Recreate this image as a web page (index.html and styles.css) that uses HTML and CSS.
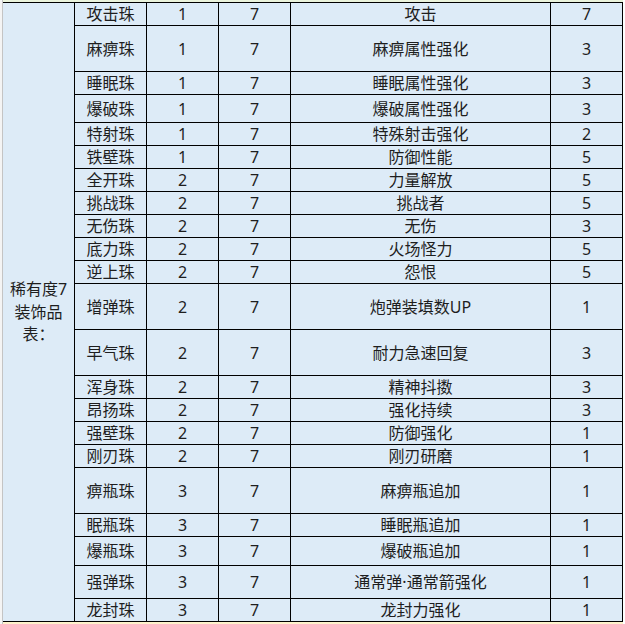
FILE: index.html
```html
<!DOCTYPE html>
<html lang="zh-CN">
<head>
<meta charset="utf-8">
<title>稀有度7装饰品表</title>
<link rel="stylesheet" href="styles.css">
</head>
<body>
<div class="sheet">
  <div class="gutter"></div>
  <div class="area">
    <div class="prev-row"></div>
    <div class="grid">
      <div class="cell merged">稀有度7<br>装饰品<br>表：</div>

      <div class="cell">攻击珠</div><div class="cell">1</div><div class="cell">7</div><div class="cell">攻击</div><div class="cell">7</div>
      <div class="cell">麻痹珠</div><div class="cell">1</div><div class="cell">7</div><div class="cell">麻痹属性强化</div><div class="cell">3</div>
      <div class="cell">睡眠珠</div><div class="cell">1</div><div class="cell">7</div><div class="cell">睡眠属性强化</div><div class="cell">3</div>
      <div class="cell">爆破珠</div><div class="cell">1</div><div class="cell">7</div><div class="cell">爆破属性强化</div><div class="cell">3</div>
      <div class="cell">特射珠</div><div class="cell">1</div><div class="cell">7</div><div class="cell">特殊射击强化</div><div class="cell">2</div>
      <div class="cell">铁壁珠</div><div class="cell">1</div><div class="cell">7</div><div class="cell">防御性能</div><div class="cell">5</div>
      <div class="cell">全开珠</div><div class="cell">2</div><div class="cell">7</div><div class="cell">力量解放</div><div class="cell">5</div>
      <div class="cell">挑战珠</div><div class="cell">2</div><div class="cell">7</div><div class="cell">挑战者</div><div class="cell">5</div>
      <div class="cell">无伤珠</div><div class="cell">2</div><div class="cell">7</div><div class="cell">无伤</div><div class="cell">3</div>
      <div class="cell">底力珠</div><div class="cell">2</div><div class="cell">7</div><div class="cell">火场怪力</div><div class="cell">5</div>
      <div class="cell">逆上珠</div><div class="cell">2</div><div class="cell">7</div><div class="cell">怨恨</div><div class="cell">5</div>
      <div class="cell">增弹珠</div><div class="cell">2</div><div class="cell">7</div><div class="cell">炮弹装填数UP</div><div class="cell">1</div>
      <div class="cell">早气珠</div><div class="cell">2</div><div class="cell">7</div><div class="cell">耐力急速回复</div><div class="cell">3</div>
      <div class="cell">浑身珠</div><div class="cell">2</div><div class="cell">7</div><div class="cell">精神抖擞</div><div class="cell">3</div>
      <div class="cell">昂扬珠</div><div class="cell">2</div><div class="cell">7</div><div class="cell">强化持续</div><div class="cell">3</div>
      <div class="cell">强壁珠</div><div class="cell">2</div><div class="cell">7</div><div class="cell">防御强化</div><div class="cell">1</div>
      <div class="cell">刚刃珠</div><div class="cell">2</div><div class="cell">7</div><div class="cell">刚刃研磨</div><div class="cell">1</div>
      <div class="cell">痹瓶珠</div><div class="cell">3</div><div class="cell">7</div><div class="cell">麻痹瓶追加</div><div class="cell">1</div>
      <div class="cell">眠瓶珠</div><div class="cell">3</div><div class="cell">7</div><div class="cell">睡眠瓶追加</div><div class="cell">1</div>
      <div class="cell">爆瓶珠</div><div class="cell">3</div><div class="cell">7</div><div class="cell">爆破瓶追加</div><div class="cell">1</div>
      <div class="cell">强弹珠</div><div class="cell">3</div><div class="cell">7</div><div class="cell">通常弹·通常箭强化</div><div class="cell">1</div>
      <div class="cell">龙封珠</div><div class="cell">3</div><div class="cell">7</div><div class="cell">龙封力强化</div><div class="cell">1</div>
    </div>
    <div class="next-row"></div>
  </div>
  <div class="right-gutter"></div>
</div>
</body>
</html>
```

FILE: styles.css
```css
html, body {
  margin: 0;
  padding: 0;
  background: #ffffff;
}

body {
  font-family: "Noto Sans", "Noto Sans CJK SC", sans-serif;
  font-size: 16px;
  color: #1e1e1e;
}

.sheet {
  display: flex;
  align-items: flex-start;
  width: 625px;
  height: 624px;
  overflow: hidden;
}

.gutter {
  width: 2px;
  height: 624px;
  background: #f4f4f4;
  flex: none;
}

.area {
  border-left: 1px solid #c4c4c4;
  display: flex;
  flex-direction: column;
  flex: none;
}

.prev-row {
  height: 2px;
  background: #eaf3dc;
}

.next-row {
  height: 3px;
  background: #fff2cc;
}

.grid {
  display: grid;
  grid-template-columns: 71px 71px 71px 71px 259px 71px;
  grid-template-rows:
    22px 45px 22px 27px
    22px 22px 22px 22px 22px 22px 22px
    45px 45px
    22px 22px 22px 22px
    45px 22px 28px 32px 22px;
  gap: 1px;
  background: #000000;
  padding: 1px 1px 1px 0;
}

.cell {
  background: #ddebf7;
  display: flex;
  align-items: center;
  justify-content: center;
  text-align: center;
  line-height: 1;
  white-space: nowrap;
  box-sizing: border-box;
}

.merged {
  grid-column: 1;
  grid-row: 1 / -1;
  line-height: 22.5px;
}

.right-gutter {
  width: 2px;
  height: 624px;
  background: #ffffff;
  flex: none;
}
```
